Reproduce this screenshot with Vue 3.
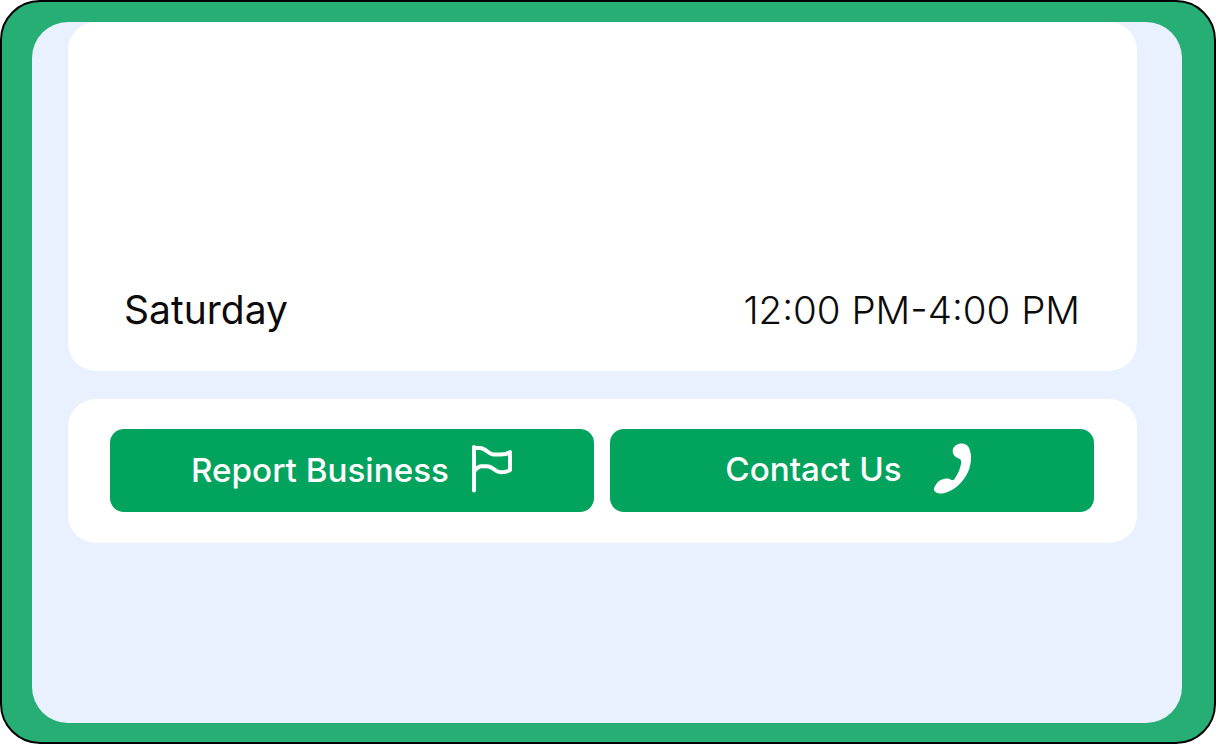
<script setup>
const buttons = [
  { label: 'Report Business', icon: 'flag' },
  { label: 'Contact Us', icon: 'phone' }
]
</script>

<template>
  <div class="frame">
    <main class="screen">
      <section class="card hours">
        <div class="row">
          <span class="day">Saturday</span>
          <span class="time">12:00 PM-4:00 PM</span>
        </div>
      </section>
      <section class="card actions">
        <button v-for="b in buttons" :key="b.label" class="action" :class="b.icon">
          <span>{{ b.label }}</span>
          <svg v-if="b.icon === 'flag'" width="42" height="50" viewBox="0 0 42 50" fill="none" stroke="#fff" stroke-width="4" stroke-linecap="round" stroke-linejoin="round">
            <path d="M3 2V45.5" />
            <path d="M3 3H9C15 3 17 9.5 23 9.5H30C34 9.5 37 8.5 39 7V25C37 26.5 33 27.2 29.7 27.2C24 27.2 22 21.2 16 21.2H10C7 21.2 5 24.5 3 26" />
          </svg>
          <svg v-else class="phone-icon" width="44" height="52" viewBox="0 0 44 52" fill="#fff">
            <path d="M20 6C21.5 2.5 25 .2 29 .5C33 .8 35.8 3 36.8 7C38.5 12 38.5 17 37 23C35.5 30 30.5 38 24.5 43C18.5 48 11.5 50.8 7 50.5C3 50.3 .5 48 1 45.5C2 42 5.5 37.5 9 36.5C11.5 35.6 14 35.3 16 35.8C18 36.8 19.5 37.8 21 36.8C23.5 33 25.8 29 26.8 25.5C27.8 22 28.6 19.5 28 17.5C27.2 15.5 24.8 15.2 23.2 14.2C20.5 12.5 19 9.5 20 6Z" />
          </svg>
        </button>
      </section>
    </main>
  </div>
</template>

<style>
html, body {
  margin: 0;
  background: #fff;
}
</style>

<style scoped>
* {
  box-sizing: border-box;
}
.frame {
  width: 1216px;
  height: 744px;
  padding: 20px 32px 19px 30px;
  background: #27ae75;
  border: 2px solid #000;
  border-radius: 40px;
  font-family: Inter, "Liberation Sans", sans-serif;
  overflow: hidden;
}
.screen {
  height: 100%;
  padding: 0 45px 0 36px;
  background: #eaf1fe;
  border-radius: 36px;
  display: flex;
  flex-direction: column;
  gap: 28px;
}
.card {
  background: #fff;
  border-radius: 28px;
}
.hours {
  height: 349px;
  padding: 0 57px 38px 56px;
  display: flex;
  flex-direction: column;
  justify-content: flex-end;
}
.row {
  display: flex;
  justify-content: space-between;
  align-items: center;
  color: #0b0b0b;
  font-size: 39px;
  line-height: 46px;
}
.time {
  font-size: 38.5px;
  font-weight: 300;
}
.actions {
  height: 144px;
  padding: 30px 43px 31px 42px;
  display: flex;
  gap: 16px;
}
.action {
  flex: 1;
  border: none;
  border-radius: 14px;
  background: #02a35d;
  color: #fff;
  font-family: inherit;
  font-size: 33.2px;
  font-weight: 450;
  display: flex;
  align-items: center;
  justify-content: center;
  gap: 22px;
  padding: 0 0 2px;
}
.phone {
  gap: 31px;
  padding-bottom: 4px;
}
.phone-icon {
  margin-right: 2px;
}
</style>
